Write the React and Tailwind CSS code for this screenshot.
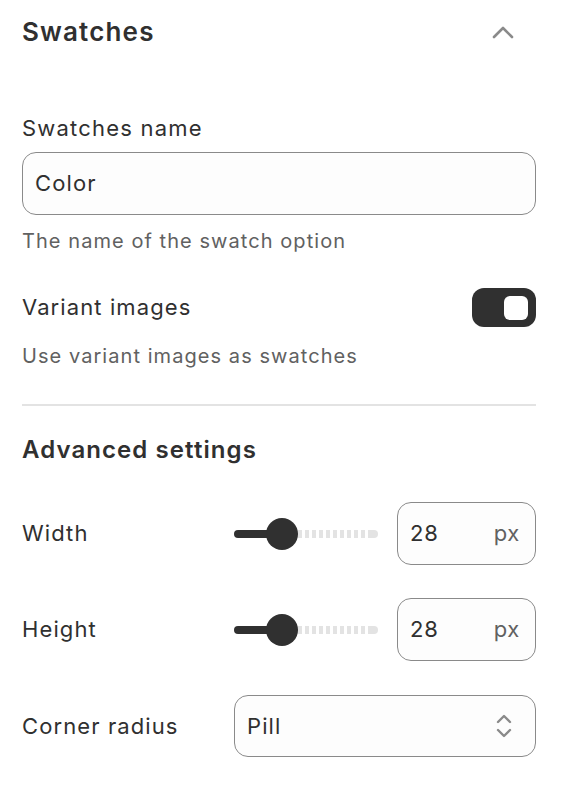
import React from "react";

function Slider() {
  return (
    <div className="relative flex h-8 w-[146px] items-center">
      {/* filled part */}
      <div className="h-2 w-[50px] rounded-full bg-[#303030]" />
      {/* empty part, dashed */}
      <div className="flex flex-1 items-center gap-[3px] pl-[14px]">
        {Array.from({ length: 10 }).map((_, i) => (
          <div key={i} className="h-2 w-[4px] bg-[#e3e3e3]" />
        ))}
        <div className="h-2 w-[10px] rounded-r-full bg-[#e3e3e3]" />
      </div>
      <div className="absolute left-[32px] top-0 h-8 w-8 rounded-full bg-[#303030]" />
    </div>
  );
}

function NumberField({ value }) {
  return (
    <div className="flex h-[63px] w-[139px] items-center justify-between rounded-[14px] border border-[#8a8a8a] bg-[#fdfdfd] pl-3 pr-[15px]">
      <span className="text-[22px] tracking-[0.04em] text-[#303030]">{value}</span>
      <span className="text-[22px] tracking-[0.03em] text-[#616161]">px</span>
    </div>
  );
}

export default function App() {
  return (
    <div
      className="min-h-screen bg-white pl-[22px] pr-[26px] pt-4 text-[#303030]"
      style={{ fontFamily: "Inter, 'Noto Sans', sans-serif" }}
    >
      {/* Header */}
      <div className="flex h-8 items-center justify-between">
        <h2 className="text-[26px] font-semibold leading-8 tracking-[0.045em]">Swatches</h2>
        <svg width="22" height="14" viewBox="0 0 22 14" className="mr-[22px]" fill="none">
          <path d="M2 12 L11 3 L20 12" stroke="#8a8a8a" strokeWidth="2.6" strokeLinecap="round" strokeLinejoin="round" />
        </svg>
      </div>

      {/* Swatches name */}
      <p className="mt-[66px] text-[22px] leading-7 tracking-[0.055em]">Swatches name</p>
      <div className="mt-[10px] flex h-[63px] items-center rounded-[14px] border border-[#8a8a8a] bg-[#fdfdfd] px-3">
        <span className="text-[22px] tracking-[0.05em] text-[#303030]">Color</span>
      </div>
      <p className="mt-3 text-[20px] leading-7 tracking-[0.053em] text-[#616161]">The name of the swatch option</p>

      {/* Variant images */}
      <div className="mt-[33px] flex h-[39px] items-center justify-between">
        <span className="text-[22px] tracking-[0.05em]">Variant images</span>
        <div className="flex h-[39px] w-16 items-center justify-end rounded-[12px] bg-[#303030] pr-2">
          <div className="h-6 w-6 rounded-[6px] bg-white" />
        </div>
      </div>
      <p className="mt-[15px] text-[20px] leading-7 tracking-[0.053em] text-[#616161]">Use variant images as swatches</p>

      <div className="mt-[34px] h-[2px] bg-[#e3e3e3]" />

      {/* Advanced settings */}
      <h3 className="mt-[28px] text-[24px] font-semibold leading-8 tracking-[0.045em]">Advanced settings</h3>

      <div className="mt-[36px] flex items-center">
        <span className="w-[212px] text-[22px] tracking-[0.05em]">Width</span>
        <Slider />
        <div className="ml-[17px]">
          <NumberField value="28" />
        </div>
      </div>

      <div className="mt-[33px] flex items-center">
        <span className="w-[212px] text-[22px] tracking-[0.05em]">Height</span>
        <Slider />
        <div className="ml-[17px]">
          <NumberField value="28" />
        </div>
      </div>

      <div className="mt-[34px] flex items-center">
        <span className="w-[212px] text-[22px] tracking-[0.05em]">Corner radius</span>
        <div className="flex h-[62px] flex-1 items-center justify-between rounded-[14px] border border-[#8a8a8a] bg-[#fdfdfd] pl-3 pr-[22px]">
          <span className="text-[22px] tracking-[0.05em]">Pill</span>
          <svg width="18" height="28" viewBox="0 0 18 28" fill="none">
            <path d="M3 10 L9 4 L15 10" stroke="#8a8a8a" strokeWidth="2.4" strokeLinecap="round" strokeLinejoin="round" />
            <path d="M3 18 L9 24 L15 18" stroke="#8a8a8a" strokeWidth="2.4" strokeLinecap="round" strokeLinejoin="round" />
          </svg>
        </div>
      </div>
    </div>
  );
}
